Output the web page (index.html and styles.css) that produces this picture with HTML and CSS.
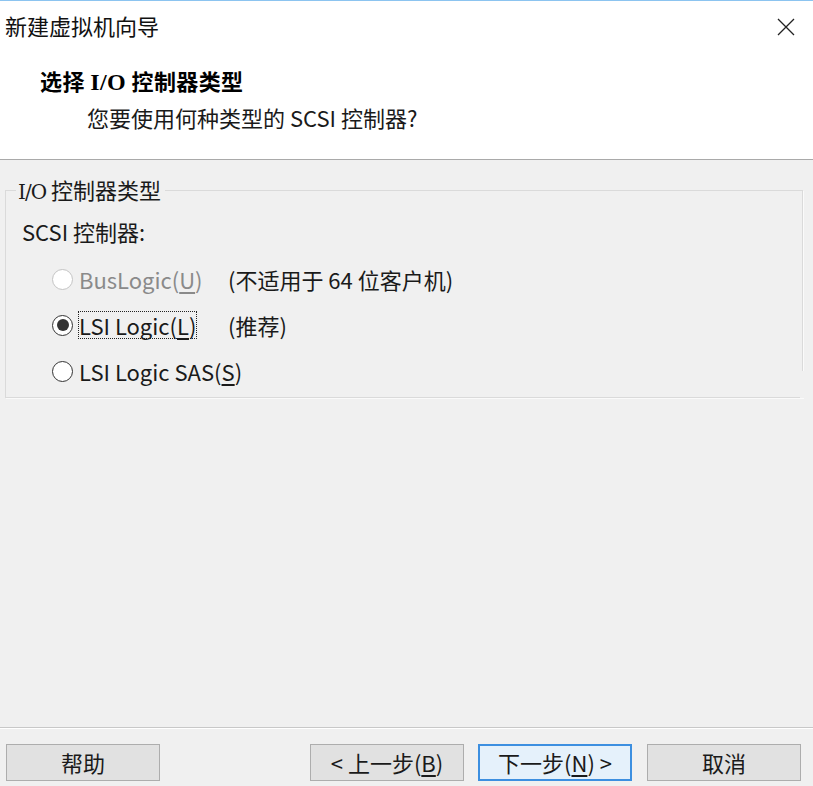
FILE: index.html
```html
<!DOCTYPE html>
<html lang="zh-CN">
<head>
<meta charset="utf-8">
<title>新建虚拟机向导</title>
<link rel="stylesheet" href="styles.css">
</head>
<body>
<div class="window">
  <div class="top">
    <div class="titlebar">
      <span class="title">新建虚拟机向导</span>
      <span class="close" aria-label="关闭">
        <svg width="18" height="18" viewBox="0 0 18 18"><path d="M1 1 L17 17 M17 1 L1 17" stroke="#222" stroke-width="1.3" fill="none"/></svg>
      </span>
    </div>
    <div class="header">
      <div class="h-title">选择 <span class="serif">I/O</span> 控制器类型</div>
      <div class="h-sub">您要使用何种类型的 SCSI 控制器?</div>
    </div>
  </div>
  <div class="content">
    <fieldset class="group">
      <legend class="legend"><span class="serif-l">I/O</span> 控制器类型</legend>
      <div class="label">SCSI 控制器:</div>
      <div class="row disabled">
        <span class="radio"></span>
        <span class="opt">BusLogic(<u>U</u>)</span>
        <span class="note">(不适用于 64 位客户机)</span>
      </div>
      <div class="row">
        <span class="radio checked"></span>
        <span class="opt"><span class="focus">LSI Logic(<u>L</u>)</span></span>
        <span class="note">(推荐)</span>
      </div>
      <div class="row">
        <span class="radio"></span>
        <span class="opt wide">LSI Logic SAS(<u>S</u>)</span>
      </div>
      <span class="gap"></span>
    </fieldset>
  </div>
  <div class="footer">
    <button class="btn">帮助</button>
    <span class="spacer"></span>
    <button class="btn">&lt; 上一步(<u>B</u>)</button>
    <button class="btn primary">下一步(<u>N</u>) &gt;</button>
    <button class="btn last">取消</button>
  </div>
</div>
</body>
</html>
```

FILE: styles.css
```css
html, body {
  margin: 0;
  padding: 0;
}
body {
  font-family: "Noto Sans CJK SC", "Noto Sans", sans-serif;
  font-size: 22px;
  color: #1a1a1a;
  background: #f0f0f0;
}
.window {
  width: 813px;
  height: 786px;
  box-sizing: border-box;
  border-top: 1px solid #8cc4f0;
  display: flex;
  flex-direction: column;
  background: #f0f0f0;
}
.top {
  background: #fff;
  border-bottom: 1px solid #a9a9a9;
}
.titlebar {
  height: 48px;
  display: flex;
  align-items: center;
  justify-content: space-between;
  padding-left: 5px;
  padding-right: 18px;
}
.title {
  line-height: 30px;
  color: #111;
}
.close {
  display: flex;
  margin-top: 4px;
}
.header {
  padding: 16px 0 27px 40px;
}
.h-title {
  font-weight: bold;
  line-height: 30px;
  font-size: 22px;
  color: #000;
  letter-spacing: 0.4px;
}
.serif {
  font-family: "Liberation Serif", serif;
  font-size: 24px;
}
.serif-l {
  font-family: "DejaVu Serif", "Liberation Serif", serif;
  font-size: 20px;
  letter-spacing: -1px;
}
.h-sub {
  margin-top: 5px;
  padding-left: 47px;
  line-height: 30px;
}
.content {
  flex: 1;
  padding: 16px 10px 0 5px;
}
.group {
  position: relative;
  margin: 0;
  padding: 0 0 3px 16px;
  border: 1px solid #dadada;
  box-shadow: 1px 1px 0 #fafafa;
  min-width: 0;
}
.legend {
  margin-left: -6px;
  padding: 0 4px 0 2px;
  line-height: 26px;
}
.label {
  margin-top: 11px;
  line-height: 30px;
}
.row {
  display: flex;
  align-items: center;
  height: 46px;
  padding-left: 30px;
  box-sizing: border-box;
}
.label + .row {
  margin-top: 10px;
}
.radio {
  width: 19px;
  height: 19px;
  border: 1.5px solid #333;
  border-radius: 50%;
  background: #fff;
  position: relative;
  flex: none;
}
.radio.checked::after {
  content: "";
  position: absolute;
  left: 3.5px;
  top: 3.5px;
  width: 12px;
  height: 12px;
  border-radius: 50%;
  background: #333;
}
.disabled .radio {
  border-color: #c4c4c4;
}
.disabled .opt {
  color: #8a8a8a;
}
.opt {
  width: 149px;
  margin-left: 6px;
  line-height: 28px;
  flex: none;
}
.opt.wide {
  width: auto;
}
.focus {
  display: inline-block;
  border: 1px dotted #222;
  padding: 0;
  line-height: 26px;
  margin-left: -1px;
}
.note {
  line-height: 28px;
}
u {
  text-underline-offset: 3px;
}
.gap {
  position: absolute;
  right: -2px;
  top: 166px;
  width: 4px;
  height: 27px;
  background: #f0f0f0;
}
.footer {
  border-top: 1px solid #c8c8c8;
  box-shadow: inset 0 1px 0 #fff;
  display: flex;
  align-items: flex-start;
  padding: 16px 12px 5px 6px;
}
.spacer {
  flex: 1;
}
.btn {
  width: 154px;
  height: 37px;
  box-sizing: border-box;
  border: 1px solid #adadad;
  background: #e1e1e1;
  font-family: "Noto Sans CJK SC", "Noto Sans", sans-serif;
  font-size: 22px;
  color: #1a1a1a;
  padding: 0;
  line-height: 33px;
}
.btn.primary {
  margin-left: 14px;
  border: 2px solid #3d8fe0;
  background: #e5f1fb;
  line-height: 31px;
}
.btn.last {
  margin-left: 15px;
}
```
